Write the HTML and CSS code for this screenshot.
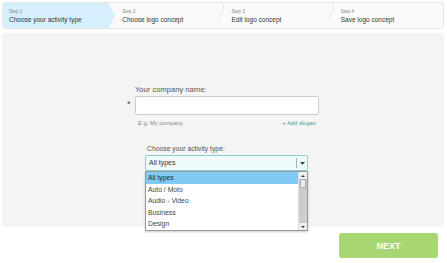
FILE: index.html
```html
<!DOCTYPE html>
<html lang="en">
	<head>
		<meta charset="UTF-8" />
		<title>Logo wizard</title>
		<link rel="stylesheet" href="styles.css">
	</head>
	<body>
		<div class="steps">
			<div class="step active">
				<span class="step-num">Step 1</span>
				<span class="step-name">Choose your activity type</span>
			</div>
			<div class="step">
				<span class="step-num">Step 2</span>
				<span class="step-name">Choose logo concept</span>
			</div>
			<div class="step">
				<span class="step-num">Step 3</span>
				<span class="step-name">Edit logo concept</span>
			</div>
			<div class="step last">
				<span class="step-num">Step 4</span>
				<span class="step-name">Save logo concept</span>
			</div>
		</div>

		<div class="panel">
			<div class="form">
				<label class="label">Your company name:</label>
				<div class="field">
					<span class="req">*</span>
					<div class="text-input"></div>
				</div>
				<div class="hint-row">
					<span class="hint">E.g. My company</span>
					<a class="slogan" href="#">+ Add slogan</a>
				</div>

				<div class="activity">
					<label class="label">Choose your activity type:</label>
					<div class="select">
						<span class="select-value">All types</span>
						<span class="select-btn">
							<svg width="5" height="3" viewBox="0 0 5 3"><path d="M0 0h5L2.5 3z" fill="#444" /></svg>
						</span>
						<div class="dropdown">
							<ul class="options">
								<li class="selected">All types</li>
								<li>Auto / Moto</li>
								<li>Audio - Video</li>
								<li>Business</li>
								<li>Design</li>
							</ul>
							<div class="scrollbar">
								<span class="sb-arrow">
									<svg width="4" height="2" viewBox="0 0 4 2"><path d="M0 2h4L2 0z" fill="#333" /></svg>
								</span>
								<span class="sb-track"><span class="sb-thumb"></span></span>
								<span class="sb-arrow">
									<svg width="4" height="2" viewBox="0 0 4 2"><path d="M0 0h4L2 2z" fill="#333" /></svg>
								</span>
							</div>
						</div>
					</div>
				</div>
			</div>
		</div>

		<div class="actions">
			<button class="next">NEXT</button>
		</div>
	</body>
</html>
```

FILE: styles.css
```css
body {
	margin: 0;
	background: #fff;
	color: #555;
	font-family: "Liberation Sans", Arial, sans-serif;
}

/* step bar */
.steps {
	display: flex;
	height: 25px;
	margin: 2px 3px 0 2px;
	border: 1px solid #e6e6e6;
	border-radius: 3px;
	background: #fafafa;
	overflow: hidden;
}

.step {
	position: relative;
	display: flex;
	flex-direction: column;
	width: 111px;
	padding: 5px 0 0 7px;
	box-sizing: border-box;
}

.step::after {
	content: "";
	position: absolute;
	right: 0;
	top: -2px;
	width: 18px;
	height: 18px;
	border-top: 1px solid #dcdcdc;
	border-right: 1px solid #dcdcdc;
	transform: translateY(6px) scaleX(0.4) rotate(45deg);
	transform-origin: right top;
}

.step.active {
	width: 114px;
	padding-left: 6px;
	background: #d6effc;
	clip-path: polygon(0 0, calc(100% - 7px) 0, 100% 50%, calc(100% - 7px) 100%, 0 100%);
}

.step.active::after,
.step.last::after {
	display: none;
}

.step-num {
	font-size: 4.6px;
	color: #888;
	line-height: 7px;
}

.step-name {
	font-size: 6.5px;
	color: #333;
	line-height: 10px;
}

/* form panel */
.panel {
	height: 194px;
	margin: 4px 3px 0 2px;
	background: #f4f4f4;
	border-radius: 3px;
}

.form {
	width: 184px;
	padding: 51px 0 0 133px;
}

.label {
	display: block;
	font-size: 7.6px;
	line-height: 11px;
	color: #555;
}

.field {
	position: relative;
	margin-top: 1px;
}

.req {
	position: absolute;
	left: -8px;
	top: 3px;
	font-size: 9px;
	color: #444;
}

.text-input {
	height: 17px;
	border: 1px solid #ccc;
	border-radius: 2px;
	background: #fff;
}

.hint-row {
	display: flex;
	justify-content: space-between;
	padding: 4px 3px 0 3px;
	font-size: 5.8px;
	line-height: 8px;
}

.hint {
	color: #888;
}

.slogan {
	color: #3f9a8c;
	text-decoration: none;
}

/* activity select */
.activity {
	width: 163px;
	margin: 17px 0 0 10px;
}

.activity .label {
	padding-left: 2px;
	font-size: 6.8px;
	line-height: 10px;
}

.select {
	position: relative;
	display: flex;
	height: 14px;
	margin-top: 1px;
	border: 1px solid #8ccfd0;
	border-radius: 2px;
	background: #effbfc;
}

.select-value {
	flex: 1;
	padding-left: 3px;
	font-size: 7px;
	line-height: 14px;
	color: #333;
}

.select-btn {
	display: flex;
	align-items: center;
	justify-content: center;
	width: 10px;
	margin: 2px 0;
	border-left: 1px solid #9bb;
}

.dropdown {
	position: absolute;
	left: -1px;
	right: -1px;
	top: 15px;
	display: flex;
	height: 58px;
	border: 1px solid #999;
	background: #fff;
	box-shadow: 0 1px 2px rgba(0, 0, 0, 0.2);
}

.options {
	flex: 1;
	margin: 0;
	padding: 0;
	list-style: none;
	font-size: 6.8px;
	color: #444;
}

.options li {
	height: 11.5px;
	padding-left: 2px;
	line-height: 11.5px;
}

.options li.selected {
	background: #7fcbf6;
	color: #222;
}

.scrollbar {
	display: flex;
	flex-direction: column;
	width: 8px;
	background: #f0f0f0;
	border-left: 1px solid #ddd;
}

.sb-arrow {
	display: flex;
	align-items: center;
	justify-content: center;
	height: 7px;
}

.sb-track {
	flex: 1;
	background: #ccc;
	padding: 0 1px;
}

.sb-thumb {
	display: block;
	height: 7px;
	background: #eee;
	border: 1px solid #aaa;
}

/* footer */
.actions {
	display: flex;
	justify-content: flex-end;
	padding: 6px 9px 0 0;
}

.next {
	width: 99px;
	height: 25px;
	border: none;
	border-radius: 3px;
	background: #a8d672;
	color: #fff;
	font-family: "Liberation Sans", Arial, sans-serif;
	font-size: 9px;
	font-weight: bold;
	cursor: pointer;
}
```
